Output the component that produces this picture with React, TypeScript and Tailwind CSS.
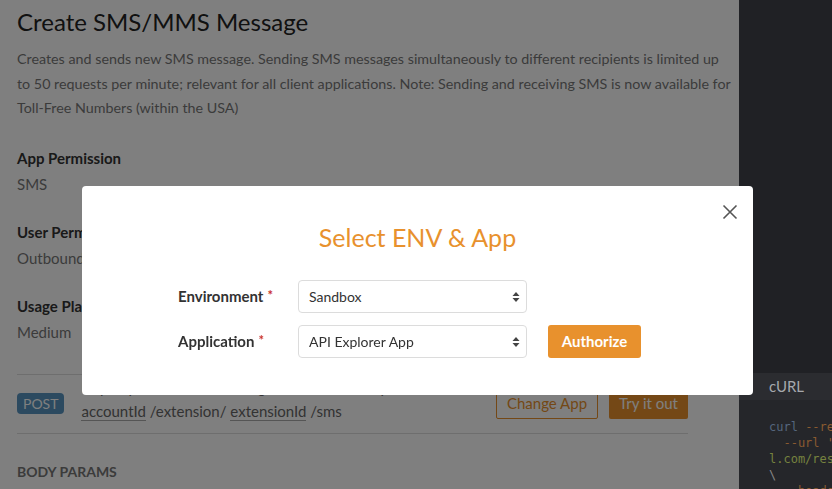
const sections = [
  { label: "App Permission", value: "SMS" },
  { label: "User Permission", value: "OutboundSMS" },
  { label: "Usage Plan Group", value: "Medium" },
];

function SelectBox({ value }: { value: string }) {
  return (
    <div className="flex h-[33px] w-[229px] items-center justify-between rounded-[4px] border border-[#dcdcdc] bg-white pl-[10px] pr-[6px] text-[14px] text-[#333]">
      <span>{value}</span>
      <svg width="8" height="12" viewBox="0 0 8 12" className="text-[#444]">
        <path d="M4 1 L7.5 5 L0.5 5 Z" fill="currentColor" />
        <path d="M4 11 L7.5 7 L0.5 7 Z" fill="currentColor" />
      </svg>
    </div>
  );
}

function FieldLabel({ text }: { text: string }) {
  return (
    <div className="w-[120px] text-[15px] font-bold text-[#333]">
      {text}
      <span className="relative top-[-2px] ml-[4px] text-[13px] text-[#c9302c]">*</span>
    </div>
  );
}

export default function App() {
  return (
    <div className="flex h-[489px] w-[832px] overflow-hidden bg-white font-['Lato','Liberation_Sans',sans-serif]">
      {/* Docs column */}
      <div className="w-[739px] shrink-0 pl-[17px] pt-[6px]">
        <h1 className="text-[24px] leading-[32px] text-[#222]">Create SMS/MMS Message</h1>
        <p className="mt-[9px] w-[716px] text-[14.3px] leading-[24.5px] text-[#777]">
          Creates and sends new SMS message. Sending SMS messages simultaneously to different recipients is limited up
          to 50 requests per minute; relevant for all client applications. Note: Sending and receiving SMS is now
          available for Toll-Free Numbers (within the USA)
        </p>

        <div className="mt-[24px] flex flex-col gap-[22px]">
          {sections.map((s) => (
            <div key={s.label} className="text-[15px] leading-[26px]">
              <div className="font-bold text-[#333]">{s.label}</div>
              <div className="text-[#777]">{s.value}</div>
            </div>
          ))}
        </div>

        <div className="mt-[29px] w-[671px]">
          <div className="border-t border-[#ddd]" />
          <div className="flex h-[58px] items-center">
            <span className="shrink-0 rounded-[4px] bg-[#5894c0] px-[6px] text-[14px] leading-[21px] text-white">POST</span>
            <div className="ml-[17px] min-w-0 self-start whitespace-nowrap text-[15px] leading-[24px] text-[#666]">
              <div>https://platform.devtest.ringcentral.com/restapi/v1.0/account/</div>
              <div>
                <span className="border-b border-[#aaa]">accountId</span> /extension/{" "}
                <span className="border-b border-[#aaa]">extensionId</span> /sms
              </div>
            </div>
            <div className="ml-auto flex shrink-0 gap-[11px]">
              <button className="h-[30px] whitespace-nowrap rounded-[2px] border border-[#e8912d] px-[10px] text-[15px] text-[#e8912d]">
                Change App
              </button>
              <button className="h-[30px] whitespace-nowrap rounded-[2px] bg-[#e8912d] px-[10px] text-[15px] text-white">
                Try it out
              </button>
            </div>
          </div>
          <div className="border-t border-[#ddd]" />
          <div className="mt-[28px] text-[14px] font-bold leading-[20px] text-[#777]">BODY PARAMS</div>
        </div>
      </div>

      {/* dim overlay */}
      <div className="fixed inset-0 z-10 bg-black/50" />

      {/* Code panel */}
      <div className="relative z-20 flex w-[93px] shrink-0 flex-col overflow-hidden bg-[#202125]">
        <div className="h-[373px] shrink-0" />
        <div className="flex h-[27px] shrink-0 items-center bg-[#2b2c30] pl-[30px] text-[15px] text-[#a6a8ad]">cURL</div>
        <div className="flex-1 bg-[#25262a] pl-[30px] pt-[19px] font-['DejaVu_Sans_Mono','Liberation_Mono',monospace] text-[12px] leading-[16px] whitespace-pre">
          <div>
            <span className="text-[#56667e]">curl</span> <span className="text-[#8a5a30]">--request POST \</span>
          </div>
          <div className="text-[#8a5a30]">  --url 'https://platform.devtest.ringcentra</div>
          <div className="text-[#76823f]">l.com/restapi/v1.0/account/~/extension/~/sms'</div>
          <div className="text-[#888]">\</div>
          <div className="text-[#8a5a30]">  --header 'accept: application/json'</div>
        </div>
      </div>

      {/* Modal */}
      <div className="fixed inset-0 z-30 pl-[82px] pt-[186px]">
        <div className="relative h-[209px] w-[671px] rounded-[4px] bg-white pt-[35px]">
          <button className="absolute right-[15px] top-[18px] text-[#555]">
            <svg width="16" height="16" viewBox="0 0 16 16">
              <path d="M1.5 1.5 L14.5 14.5 M14.5 1.5 L1.5 14.5" stroke="currentColor" strokeWidth="1.6" />
            </svg>
          </button>
          <h2 className="text-center text-[25px] leading-[32px] text-[#e8912d]">Select ENV &amp; App</h2>
          <div className="mt-[27px] flex flex-col gap-[12px] pl-[96px]">
            <div className="flex items-center">
              <FieldLabel text="Environment" />
              <SelectBox value="Sandbox" />
            </div>
            <div className="flex items-center">
              <FieldLabel text="Application" />
              <SelectBox value="API Explorer App" />
              <button className="ml-[21px] h-[33px] w-[93px] rounded-[3px] bg-[#e8912d] text-[15px] font-bold text-white">
                Authorize
              </button>
            </div>
          </div>
        </div>
      </div>
    </div>
  );
}
